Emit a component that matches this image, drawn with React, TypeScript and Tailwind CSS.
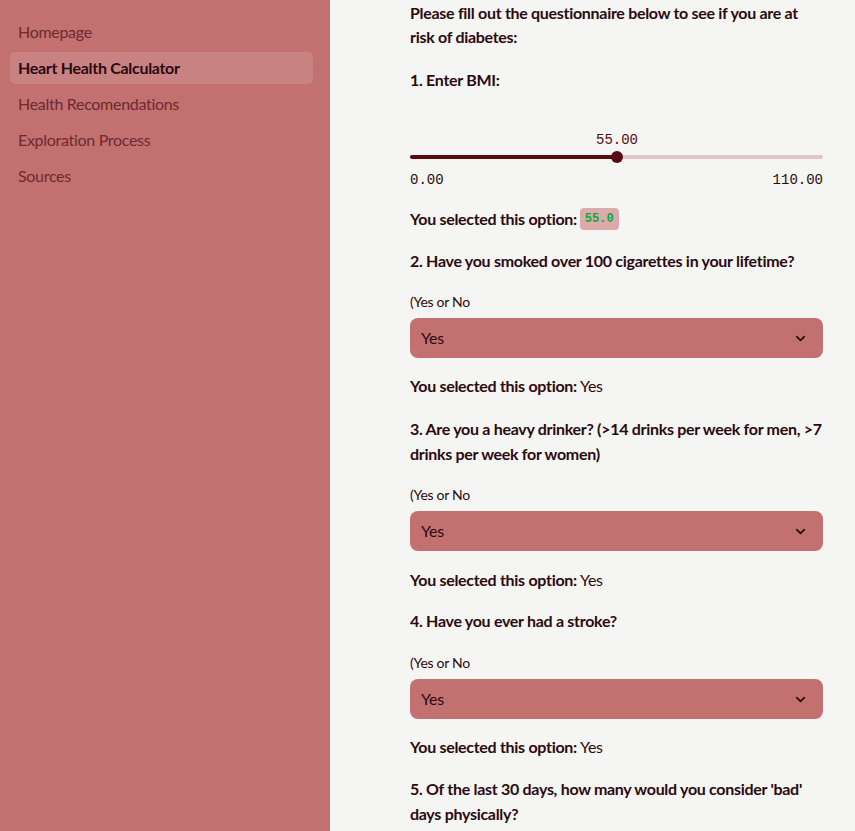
import React from "react";
import { ChevronDown } from "lucide-react";

const font = { fontFamily: "Lato, 'Noto Sans', sans-serif" };

function Select() {
  return (
    <div className="mt-[6px] flex h-[40px] w-full items-center justify-between rounded-[8px] bg-[#c27070] pl-[11px] pr-[15px] text-[16px] tracking-[-0.2px] text-[#2a0a10]">
      <span>Yes</span>
      <ChevronDown size={15} strokeWidth={2.8} className="text-[#2a0a10]" />
    </div>
  );
}

function Selected({ mt }: { mt: string }) {
  return (
    <div className={`${mt} h-[24px] text-[16px] leading-[24px] tracking-[-0.3px] text-[#2a0a10]`}>
      <span className="font-bold">You selected this option:</span> Yes
    </div>
  );
}

export default function App() {
  const nav = [
    "Homepage",
    "Heart Health Calculator",
    "Health Recomendations",
    "Exploration Process",
    "Sources",
  ];
  return (
    <div className="flex h-[831px] w-[855px] overflow-hidden bg-[#f5f5f3]" style={font}>
      <aside className="h-full w-[330px] shrink-0 bg-[#c27070] pl-[10px] pr-[17px] pt-[16px]">
        <div className="flex flex-col gap-[4px]">
          {nav.map((n, i) => (
            <div
              key={n}
              className={`flex h-[32px] items-center rounded-[5px] pl-[8px] text-[16px] tracking-[-0.3px] ${
                i === 1 ? "bg-[#c98282] font-bold text-[#2a0a10]" : "text-[#6e2a31]"
              }`}
            >
              {n}
            </div>
          ))}
        </div>
      </aside>
      <main className="w-[413px] shrink-0 pl-[80px] pt-[1px] box-content">
        <div className="w-[413px] text-[#2a0a10] tracking-[-0.3px]">
          <div className="text-[16px] font-bold leading-[24px]">
            Please fill out the questionnaire below to see if you are at risk of diabetes:
          </div>
          <div className="mt-[19px] h-[24px] text-[16px] font-bold leading-[24px]">1. Enter BMI:</div>

          <div className="mt-[38px] tracking-normal" style={{ fontFamily: "'Liberation Mono', monospace" }}>
            <div className="relative h-[20px] text-[14px] leading-[20px] text-[#590a10]">
              <span className="absolute left-[207px] -translate-x-1/2">55.00</span>
            </div>
            <div className="relative h-[14px]">
              <div className="absolute left-0 right-0 top-[5px] h-[4px] rounded-full bg-[#e1c8c8]" />
              <div className="absolute left-0 top-[5px] h-[4px] w-[207px] rounded-full bg-[#590a10]" />
              <div className="absolute left-[201px] top-[1px] h-[12px] w-[12px] rounded-full bg-[#590a10]" />
            </div>
            <div className="mt-[6px] flex h-[20px] justify-between text-[14px] leading-[20px] text-[#2a0a10]">
              <span>0.00</span>
              <span>110.00</span>
            </div>
          </div>

          <div className="mt-[17px] flex h-[24px] items-center text-[16px] leading-[24px]">
            <span className="font-bold">You selected this option:</span>
            <span
              className="ml-[3px] rounded-[4px] bg-[#dcaaaa] px-[5px] text-[12px] font-bold leading-[22px] tracking-normal text-[#09ab3b]"
              style={{ fontFamily: "'Liberation Mono', monospace" }}
            >
              55.0
            </span>
          </div>

          <div className="mt-[18px] h-[24px] text-[16px] font-bold leading-[24px]">
            2. Have you smoked over 100 cigarettes in your lifetime?
          </div>
          <div className="mt-[19px] h-[20px] text-[14px] leading-[20px]">(Yes or No</div>
          <Select />
          <Selected mt="mt-[16px]" />

          <div className="mt-[18px] text-[16px] font-bold leading-[25px]">
            3. Are you a heavy drinker? (&gt;14 drinks per week for men, &gt;7 drinks per week for women)
          </div>
          <div className="mt-[19px] h-[20px] text-[14px] leading-[20px]">(Yes or No</div>
          <Select />
          <Selected mt="mt-[17px]" />

          <div className="mt-[17px] h-[24px] text-[16px] font-bold leading-[24px]">
            4. Have you ever had a stroke?
          </div>
          <div className="mt-[20px] h-[20px] text-[14px] leading-[20px]">(Yes or No</div>
          <Select />
          <Selected mt="mt-[16px]" />

          <div className="mt-[17px] text-[16px] font-bold leading-[25px]">
            5. Of the last 30 days, how many would you consider 'bad' days physically?
          </div>
        </div>
      </main>
    </div>
  );
}
